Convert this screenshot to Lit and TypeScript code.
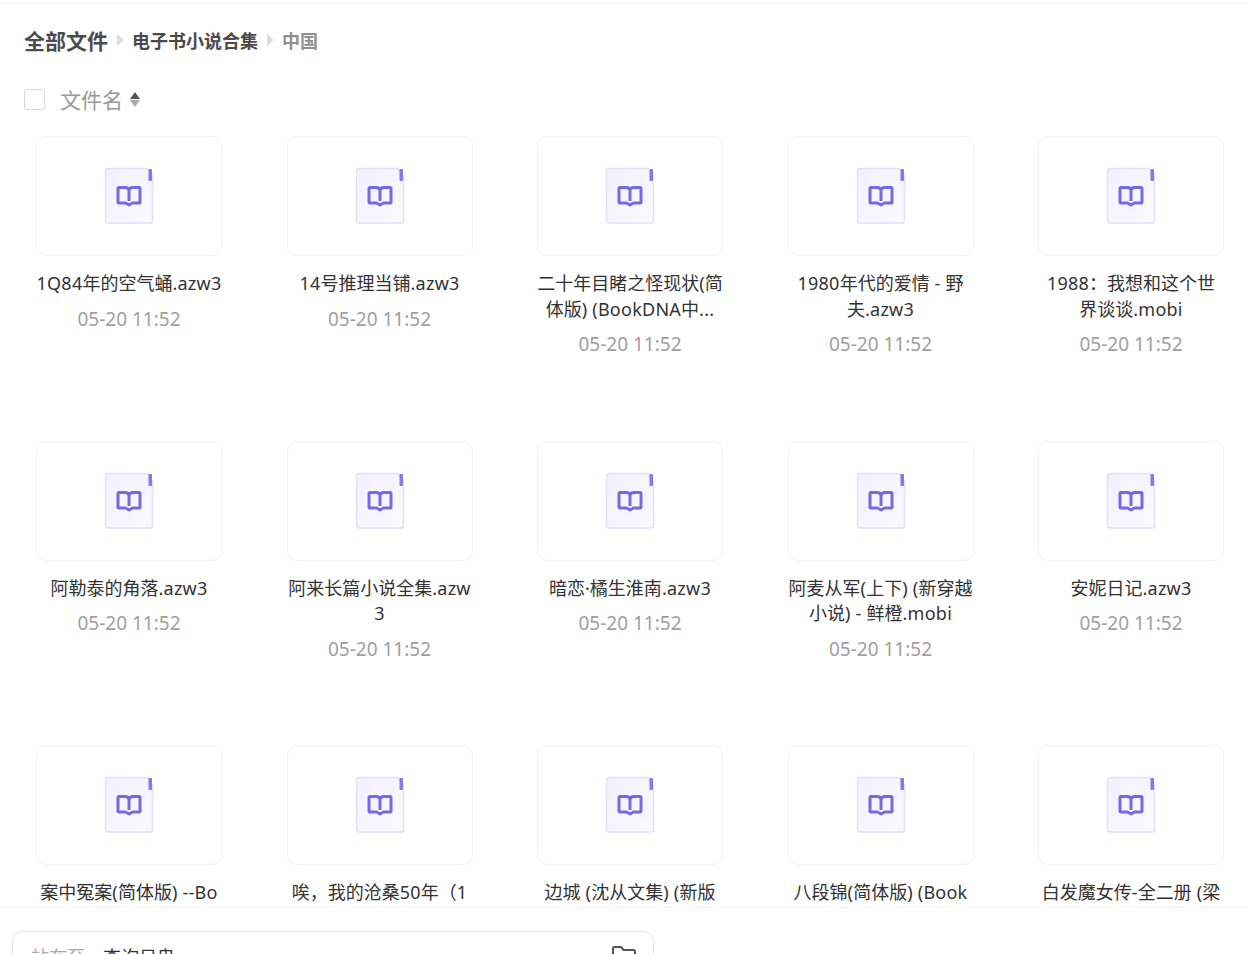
import { LitElement, html, css } from "lit";
import { customElement } from "lit/decorators.js";

const files = [
  "1Q84年的空气蛹.azw3", "14号推理当铺.azw3", "二十年目睹之怪现状(简\n体版) (BookDNA中...", "1980年代的爱情 - 野\n夫.azw3", "1988：我想和这个世\n界谈谈.mobi",
  "阿勒泰的角落.azw3", "阿来长篇小说全集.azw\n3", "暗恋·橘生淮南.azw3", "阿麦从军(上下) (新穿越\n小说) - 鲜橙.mobi", "安妮日记.azw3",
  "案中冤案(简体版) --Bo", "唉，我的沧桑50年（1", "边城 (沈从文集) (新版", "八段锦(简体版) (Book", "白发魔女传-全二册 (梁",
];

@customElement("app-root")
export class AppRoot extends LitElement {
  static styles = css`
    :host { display: block; width: 1247px; height: 954px; overflow: hidden; position: relative; background: #fff;
      font-family: "Noto Sans", "Noto Sans CJK SC", sans-serif; }
    .top { height: 3px; border-bottom: 1px solid #f2f2f2; }
    .crumbs { display: flex; align-items: center; height: 28px; margin: 22px 0 0 24px; color: #4a4a4a; font-weight: 700; font-size: 18px; }
    .crumbs .root { font-size: 21px; }
    .crumbs .last { color: #8f8f8f; }
    .sep { width: 0; height: 0; border-style: solid; border-width: 6px 0 6px 7px; border-color: transparent transparent transparent #dcdcdc; margin: 0 8px 0 9px; }
    .head { display: flex; align-items: center; height: 32px; margin: 29px 0 0 24px; color: #999; font-size: 21px; }
    .check { width: 19px; height: 19px; border: 1px solid #d9d9d9; border-radius: 3px; margin-right: 15px; }
    .sort { display: flex; flex-direction: column; gap: 1px; margin-left: 7px; }
    .up, .down { width: 0; height: 0; border-left: 5px solid transparent; border-right: 5px solid transparent; }
    .up { border-bottom: 7px solid #555; }
    .down { border-top: 7px solid #aaa; }
    .grid { display: grid; grid-template-columns: repeat(5, 186px); justify-content: space-between; grid-auto-rows: 304.5px; padding: 21px 23px 0 36px; }
    .item { text-align: center; }
    .card { height: 118px; border: 1px solid #f2f2f2; border-radius: 10px; display: flex; align-items: center; justify-content: center; }
    .name { margin-top: 15px; font-size: 18px; line-height: 25.5px; color: #333; white-space: pre-line; }
    .lat { letter-spacing: 0.25px; }
    .date { margin-top: 10px; font-size: 19px; line-height: 25px; color: #a0a0a0; }
    .foot { position: absolute; left: 0; right: 0; top: 907px; bottom: 0; background: #fff; border-top: 1px solid #f2f2f2; }
    .box { position: absolute; left: 12px; top: 23px; width: 640px; height: 60px; border: 1px solid #e6e6e6; border-radius: 10px; font-size: 18px; }
    .box .t { position: absolute; left: 18px; top: 13px; color: #333; line-height: 25px; white-space: nowrap; }
    .box .t span { color: #aaa; margin-right: 18px; }
    .box svg { position: absolute; left: 598px; top: 13px; }
  `;
  icon() {
    return html`<svg width="50" height="58" viewBox="0 0 50 58" fill="none">
      <defs><linearGradient id="docfill" x1="0" y1="0" x2="1" y2="1"><stop offset="0" stop-color="#f2f0fe"/><stop offset="1" stop-color="#fafaff"/></linearGradient></defs>
      <path d="M4 1.5H43L48.5 9V53.5C48.5 55 47.5 56 46 56H4C2.5 56 1.5 55 1.5 53.5V4C1.5 2.5 2.5 1.5 4 1.5Z" fill="url(#docfill)" stroke="#e2defb" stroke-width="1.4"/>
      <rect x="44.5" y="2" width="3.5" height="12" rx="1" fill="#8379ea"/>
      <path d="M15 20.5H21C23 20.5 25 21.5 25 23.5C25 21.5 27 20.5 29 20.5H35C35.8 20.5 36 21 36 21.5V35C36 35.6 35.6 36 35 36H28.5L25 38L21.5 36H15C14.4 36 14 35.6 14 35V21.5C14 21 14.4 20.5 15 20.5Z M25 23.5V34" stroke="#7669e6" stroke-width="3" stroke-linejoin="round"/>
    </svg>`;
  }
  nameParts(f: string) {
    return f.split(/([\x00-\x7f]+)/).map((p, i) => (i % 2 ? html`<span class="lat">${p}</span>` : p));
  }
  render() {
    return html`
      <div class="top"></div>
      <div class="crumbs"><span class="root">全部文件</span><i class="sep"></i><span>电子书小说合集</span><i class="sep"></i><span class="last">中国</span></div>
      <div class="head"><div class="check"></div><span>文件名</span><div class="sort"><i class="up"></i><i class="down"></i></div></div>
      <div class="grid">
        ${files.map((f) => html`<div class="item"><div class="card">${this.icon()}</div><div class="name">${this.nameParts(f)}</div><div class="date">05-20 11:52</div></div>`)}
      </div>
      <div class="foot"><div class="box"><div class="t"><span>站在至</span>查询日鬼</div>
        <svg width="26" height="22" viewBox="0 0 26 22" fill="none"><path d="M2 19V3.5C2 2.5 2.6 2 3.5 2H10L12.5 5H22.5C23.4 5 24 5.6 24 6.5V19" stroke="#555" stroke-width="2"/></svg></div></div>
    `;
  }
}
